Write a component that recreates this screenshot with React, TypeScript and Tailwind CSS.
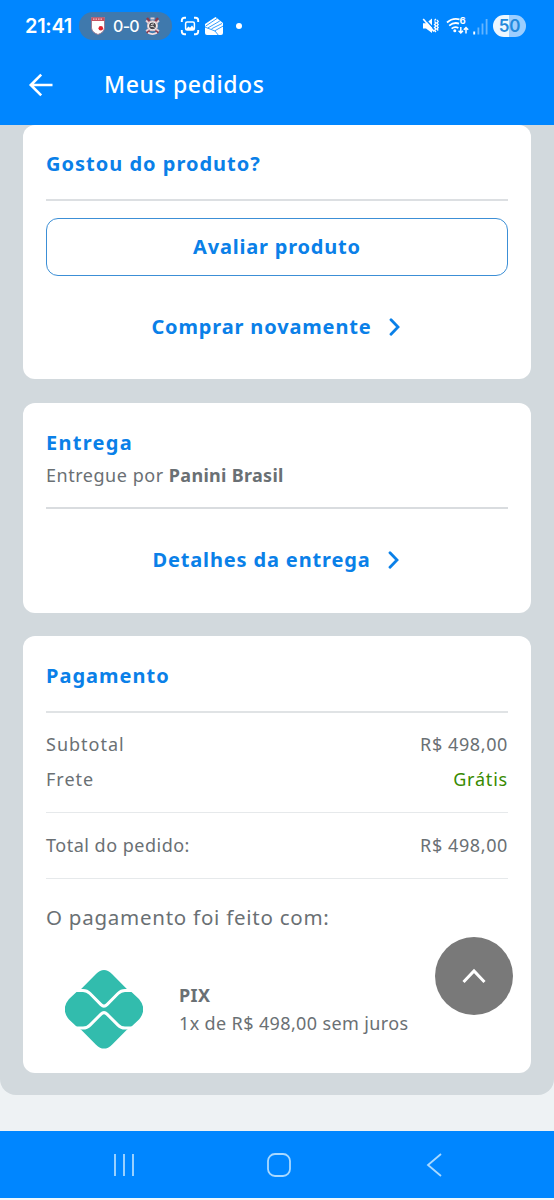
import React from "react";

function StatusBar() {
  return (
    <div className="flex h-[52px] items-center pl-[25px] pr-[28px] text-white">
      <span className="w-[49px] whitespace-nowrap font-[Inter] text-[20px] font-semibold leading-none tracking-[-0.3px]">21:41</span>

      <div className="ml-[5px] flex h-[28px] w-[93px] items-center justify-between rounded-full bg-[#3f79ad] pl-[12px] pr-[12px]">
        <svg width="14" height="18" viewBox="0 0 14 18">
          <path d="M0.5 0.5H13.5V11Q13 15.5 7 17.5Q1 15.5 0.5 11Z" fill="#fff" stroke="#9b7c94" />
          <path d="M0.5 0.5H13.5V4H0.5Z" fill="#c9505f" />
          <path d="M2 2.2H12" stroke="#f3c2c6" strokeWidth="1.2" strokeDasharray="1.5 1" />
          <circle cx="9.8" cy="11.3" r="2.3" fill="#e3202c" />
        </svg>
        <span className="ml-[2px] font-[Inter] text-[16px] font-medium leading-none tracking-[-0.7px]">0-0</span>
        <svg width="15" height="18" viewBox="0 0 15 18">
          <path d="M2 1L13 16M13 1L2 16" stroke="#8e3b4d" strokeWidth="2.4" />
          <path d="M1 3.5L3.5 6M14 3.5L11.5 6M1 14L4 12M14 14L11 12M5.5 1.5H9.5" stroke="#e6ced3" strokeWidth="1.8" />
          <circle cx="7.5" cy="8.8" r="4.9" fill="#fff" stroke="#d9c3c9" strokeWidth="1.2" />
          <circle cx="7.5" cy="8.8" r="3.4" fill="#4c474d" />
          <path d="M6 7.6L9 6.8M5.5 9.4H8M7.5 9L9.5 10.5" stroke="#ddd" />
          <path d="M3 15.8Q7.5 18.3 12 15.8" stroke="#f3dfe2" strokeWidth="1.8" fill="none" />
        </svg>
      </div>

      <svg className="ml-[8px]" width="20" height="20" viewBox="0 0 20 20" fill="none" stroke="#fff" strokeWidth="1.9">
        <path d="M1.8 6V4.5Q1.8 1.8 4.5 1.8H6M14 1.8H15.5Q18.2 1.8 18.2 4.5V6M18.2 14V15.5Q18.2 18.2 15.5 18.2H14M6 18.2H4.5Q1.8 18.2 1.8 15.5V14" />
        <rect x="5.6" y="6" width="8.8" height="8" rx="1.5" strokeWidth="1.5" />
        <path d="M6 13L8.5 10.5L10 11.8L12 9.5L14 12V14H6Z" fill="#fff" stroke="none" />
      </svg>
      <svg className="ml-[4px]" width="20" height="20" viewBox="0 0 20 20">
        <path d="M1 8L11.5 1L19 7V17Q19 19 17 19H3Q1 19 1 17Z" fill="#fff" />
        <path d="M1.5 10.2L13 2.5M3.8 12L15.8 5M7.5 12.8L18 7.5M0.8 11L11 15L14.5 19.4M10.8 14.8L19.2 10" stroke="#0086ff" strokeWidth="0.8" fill="none" />
      </svg>
      <span className="ml-[12px] h-[6px] w-[6px] rounded-full bg-white" />

      <div className="ml-auto flex items-center">
        <svg width="17" height="18" viewBox="0 0 17 18" fill="none" stroke="#fff">
          <path d="M1 6.2H4L10 1.5V16L4 11.5H1Z" fill="#fff" stroke="none" />
          <path d="M2.5 1.2L14 14" stroke="#0086ff" strokeWidth="1.4" />
          <path d="M1.2 2L12 14.5" strokeWidth="1.6" />
          <path d="M12.5 3.5L14 2M12.5 4.5L14 6L12.5 7.5L14 9L12.5 10.5L14 12L12.5 13.5L14 15M15 3L16.2 4.5L15 6L16.2 7.5L15 9L16.2 10.5L15 12L16.2 13.5" strokeWidth="1.3" />
        </svg>
        <div className="relative ml-[7px] h-[18px] w-[24px]">
          <svg width="24" height="18" viewBox="0 0 24 18" fill="none" stroke="#fff" strokeWidth="1.8">
            <path d="M1 5.5Q6.5 0.5 13.5 2.3M3.2 8.6Q8 4.7 13 6.6M5.6 11.6Q9 9 12.4 11" />
            <circle cx="8.8" cy="13.8" r="1.5" fill="#fff" stroke="none" />
            <path d="M14.8 10V16M12.6 13.8L14.8 16L17 13.8M20 16.5V10.5M17.8 12.7L20 10.5L22.2 12.7" strokeWidth="1.5" />
          </svg>
          <span className="absolute left-[13.5px] top-[-1px] font-[Inter] text-[9.5px] font-bold leading-[10px]">6</span>
        </div>
        <svg className="ml-[3px]" width="15" height="17" viewBox="0 0 15 17">
          <path d="M1.2 13.5V16.5" stroke="#fff" strokeWidth="1.9" />
          <path d="M5.4 9.5V16.5M9.5 5.5V16.5M13.6 1V16.5" stroke="#65b5ff" strokeWidth="1.8" />
        </svg>
        <div className="ml-[5px] flex h-[22px] w-[33px] items-center justify-center rounded-full bg-linear-to-r from-[#edf7ff] from-50% to-[#9cceff] to-50%">
          <span className="font-[Inter] text-[17px] font-semibold leading-none tracking-[-0.3px] text-[#2389dc]">50</span>
        </div>
      </div>
    </div>
  );
}

function Header() {
  return (
    <header className="flex h-[73px] items-center pb-[8px] pl-[28px] text-white">
      <svg width="26" height="24" viewBox="0 0 26 24" fill="none" stroke="#fff" strokeWidth="2.6">
        <path d="M24.5 12H3M13.2 1.6L2.8 12L13.2 22.4" />
      </svg>
      <h1 className="ml-[50px] whitespace-nowrap text-[23px] font-medium leading-none tracking-[0.6px]">Meus pedidos</h1>
    </header>
  );
}

function LinkAction({ label }: { label: string }) {
  return (
    <div className="flex items-center justify-center gap-[17px] pr-[3px] text-[#0a80e8]">
      <span className="whitespace-nowrap text-[20px] font-bold leading-[28px] tracking-[0.85px]">{label}</span>
      <svg width="11" height="18" viewBox="0 0 11 18" fill="none" stroke="currentColor" strokeWidth="2.8" strokeLinecap="round">
        <path d="M2 1.8L9 9L2 16.2" />
      </svg>
    </div>
  );
}

function PixLogo() {
  return (
    <svg width="78" height="79" viewBox="0 0 78 79">
      <path
        d="M31 4Q39 -3.8 47 4L61.6 18.7L66.5 22L74 29Q82.5 39.3 74 49.6L66.5 56.6L61.6 60L47 74.7Q39 82.5 31 74.7L16.4 60L11.5 56.6L4 49.6Q-4.5 39.3 4 29L11.5 22L16.4 18.7Z"
        fill="#32bcad"
      />
      <g fill="none" stroke="#fff" strokeWidth="3">
        <path d="M8 20.5H18Q22 20.5 25 23.5L36 34.6Q39 37.5 42 34.6L53 23.5Q56 20.5 60 20.5H70" />
        <path d="M8 58.1H18Q22 58.1 25 55.1L36 44.1Q39 41.2 42 44.1L53 55.1Q56 58.1 60 58.1H70" />
      </g>
    </svg>
  );
}

const title = "whitespace-nowrap text-[20px] font-bold leading-[28px] text-[#0a80e8]";
const row = "flex h-[35px] items-center justify-between whitespace-nowrap text-[18px]";

export default function App() {
  return (
    <div className="flex h-[1200px] w-[554px] flex-col overflow-hidden bg-[#eef2f4] font-['Noto_Sans',sans-serif] text-[#6a7074]">
      <div className="h-[125px] shrink-0 bg-[#0086ff]">
        <StatusBar />
        <Header />
      </div>

      <main className="flex h-[970px] shrink-0 flex-col rounded-b-[16px] bg-[#d2d9dd] px-[23px]">
        <section className="h-[254px] rounded-[12px] bg-white px-[23px] pt-[25px]">
          <h2 className={`${title} tracking-[1px]`}>Gostou do produto?</h2>
          <div className="mt-[21px] h-[2px] bg-[#dcdfe2]" />
          <button className="mt-[17px] block h-[58px] w-full rounded-[12px] border-[1.5px] border-[#3c8fd6] text-[20px] font-bold tracking-[0.8px] text-[#0a80e8]">
            Avaliar produto
          </button>
          <div className="mt-[37px]">
            <LinkAction label="Comprar novamente" />
          </div>
        </section>

        <section className="mt-[24px] h-[210px] rounded-[12px] bg-white px-[23px] pt-[26px]">
          <h2 className={`${title} tracking-[1.3px]`}>Entrega</h2>
          <p className="mt-[4px] whitespace-nowrap text-[18px] leading-[28px] tracking-[0.53px]">
            Entregue por <b className="tracking-[0.3px]">Panini Brasil</b>
          </p>
          <div className="mt-[18px] h-[2px] bg-[#d9dcdf]" />
          <div className="mt-[37px]">
            <LinkAction label="Detalhes da entrega" />
          </div>
        </section>

        <section className="mt-[23px] h-[437px] rounded-[12px] bg-white px-[23px] pt-[26px]">
          <h2 className={`${title} tracking-[1px]`}>Pagamento</h2>
          <div className="mt-[21px] h-[2px] bg-[#e0e3e5]" />
          <div className="mt-[14px]">
            <div className={row}>
              <span className="tracking-[1px]">Subtotal</span>
              <span className="tracking-[0.6px]">R$ 498,00</span>
            </div>
            <div className={row}>
              <span className="tracking-[1px]">Frete</span>
              <span className="tracking-[0.8px] text-[#388a00]">Grátis</span>
            </div>
          </div>
          <div className="mt-[15px] h-px bg-[#e6e9eb]" />
          <div className={`mt-[15px] ${row}`}>
            <span className="tracking-[0.5px]">Total do pedido:</span>
            <span className="tracking-[0.6px]">R$ 498,00</span>
          </div>
          <div className="mt-[15px] h-px bg-[#e6e9eb]" />
          <p className="mt-[24px] whitespace-nowrap text-[20.5px] leading-[28px] tracking-[0.75px]">O pagamento foi feito com:</p>
          <div className="mt-[39px] flex pl-[19px]">
            <PixLogo />
            <div className="ml-[36px] mt-[11px] whitespace-nowrap text-[18px] leading-[28px] tracking-[0.37px]">
              <b className="block">PIX</b>
              <span>1x de R$ 498,00 sem juros</span>
            </div>
          </div>
        </section>
      </main>

      <nav className="mt-[36px] flex h-[67px] shrink-0 items-center bg-[#0086ff] pl-[112px]">
        <svg width="24" height="24" viewBox="0 0 24 24" stroke="#a9d9ff" strokeWidth="1.8">
          <path d="M3 1V23M12 1V23M21 1V23" />
        </svg>
        <svg className="ml-[131px]" width="24" height="24" viewBox="0 0 24 24" fill="none" stroke="#a9d9ff" strokeWidth="1.8">
          <rect x="1" y="1" width="22" height="22" rx="7" />
        </svg>
        <svg className="ml-[135px]" width="16" height="24" viewBox="0 0 16 24" fill="none" stroke="#a9d9ff" strokeWidth="1.8">
          <path d="M15 1L2 12L15 23" />
        </svg>
      </nav>
      <div className="h-[2px] shrink-0 bg-[#eef9ff]" />

      <button className="absolute left-[435px] top-[937px] flex h-[78px] w-[78px] items-center justify-center rounded-full bg-[#797979]">
        <svg width="24" height="16" viewBox="0 0 24 16" fill="none" stroke="#fff" strokeWidth="3">
          <path d="M1.5 14L12 3L22.5 14" />
        </svg>
      </button>
    </div>
  );
}
